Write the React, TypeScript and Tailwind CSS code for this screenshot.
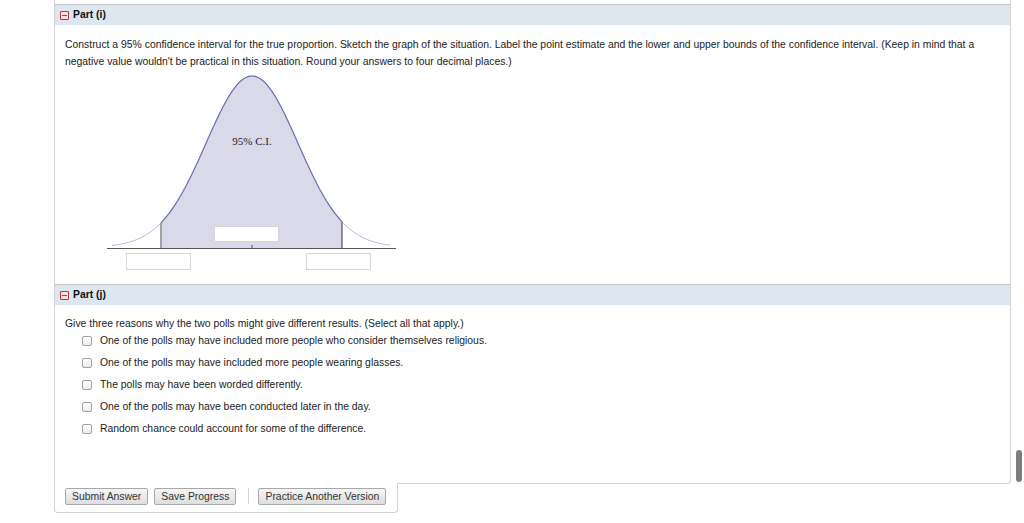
import React from "react";

const MU = 152;
const SIGMA = 46;
const BASE = 177;
const PEAK = 171;
const LO = 61;
const HI = 242;

function yAt(x: number) {
  const d = x - MU;
  return BASE - PEAK * Math.exp(-(d * d) / (2 * SIGMA * SIGMA));
}

function curve(from: number, to: number) {
  const pts: string[] = [];
  for (let x = from; x <= to; x += 1) {
    pts.push(`${x},${yAt(x).toFixed(2)}`);
  }
  return pts;
}

function BellGraph() {
  const mid = curve(LO, HI);
  const fill = `M${LO},178 L${mid.join(" L")} L${HI},178 Z`;
  return (
    <div className="relative ml-[35px] h-[203px] w-[300px]">
      <svg width="300" height="203" className="absolute left-0 top-0">
        <path d={fill} fill="#d9d9e9" />
        <polyline points={curve(12, LO).join(" ")} fill="none" stroke="#a9a9d6" strokeWidth="0.8" />
        <polyline points={curve(HI, 290).join(" ")} fill="none" stroke="#a9a9d6" strokeWidth="0.8" />
        <polyline points={mid.join(" ")} fill="none" stroke="#6b6bb0" strokeWidth="1.2" />
        <line x1={LO} y1={yAt(LO)} x2={LO} y2="178" stroke="#8a8a8a" strokeWidth="1.5" />
        <line x1={HI} y1={yAt(HI)} x2={HI} y2="178" stroke="#6e6e6e" strokeWidth="1.5" />
        <line x1="7" y1="178.5" x2="296" y2="178.5" stroke="#555" strokeWidth="1" />
        <line x1={MU} y1="175" x2={MU} y2="178" stroke="#555" strokeWidth="1" />
        <text
          x={MU}
          y="75"
          textAnchor="middle"
          fontSize="11"
          fontFamily="'Liberation Serif', serif"
          fill="#222"
        >
          95% C.I.
        </text>
      </svg>
      <div className="absolute left-[114px] top-[156px] h-[16px] w-[65px] border border-[#d6d6d6] bg-white" />
      <div className="absolute left-[26px] top-[183px] h-[17px] w-[65px] border border-[#d6d6d6] bg-white" />
      <div className="absolute left-[206px] top-[183px] h-[17px] w-[65px] border border-[#d6d6d6] bg-white" />
    </div>
  );
}

function PartHeader({ label }: { label: string }) {
  return (
    <div className="flex h-[21px] items-center gap-[4px] border-t border-[#c6c6c6] bg-[#dce7ef] pl-[5px]">
      <span className="flex h-[9px] w-[9px] items-center justify-center rounded-[1px] border border-[#b8323f] bg-[#f7e1e1]">
        <span className="h-[1px] w-[5px] bg-[#b8323f]" />
      </span>
      <span className="text-[10.4px] font-bold text-[#111]">{label}</span>
    </div>
  );
}

const reasons = [
  "One of the polls may have included more people who consider themselves religious.",
  "One of the polls may have included more people wearing glasses.",
  "The polls may have been worded differently.",
  "One of the polls may have been conducted later in the day.",
  "Random chance could account for some of the difference.",
];

function Btn({ children }: { children: React.ReactNode }) {
  return (
    <button className="h-[17px] rounded-[2px] border border-[#a8a8a8] bg-gradient-to-b from-[#f6f6f6] to-[#dedede] px-[6px] text-[10.4px] leading-[15px] text-[#333]">
      {children}
    </button>
  );
}

export default function App() {
  return (
    <div className="relative h-[523px] w-[1024px] overflow-hidden bg-white font-['Liberation_Sans',Arial,sans-serif] text-[#222]">
      <div className="ml-[54px] h-[484px] w-[957px] rounded-br-[4px] border border-t-0 border-[#d2d2d2] pt-[4px]">
        <PartHeader label="Part (i)" />
        <div className="h-[259px] pl-[10px] pr-[20px] pt-[11px]">
          <p className="text-[10.4px] leading-[17px]">
            Construct a 95% confidence interval for the true proportion. Sketch the graph of the situation. Label the point estimate and the lower and upper bounds of the confidence interval. (Keep in mind that a negative value wouldn't be practical in this situation. Round your answers to four decimal places.)
          </p>
          <BellGraph />
        </div>
        <PartHeader label="Part (j)" />
        <div className="h-[178px] pl-[10px] pt-[11px]">
          <p className="text-[10.4px] leading-[16px]">
            Give three reasons why the two polls might give different results. (Select all that apply.)
          </p>
          <ul className="flex flex-col gap-[5px] pl-[17px]">
            {reasons.map((r) => (
              <li key={r} className="flex h-[17px] items-center gap-[8px] text-[10.4px]">
                <span className="h-[10px] w-[10px] rounded-[2px] border border-[#a0a0a0] bg-gradient-to-b from-white to-[#ececec]" />
                <span>{r}</span>
              </li>
            ))}
          </ul>
        </div>
      </div>
      <div className="-mt-px ml-[54px] flex h-[30px] w-[344px] items-start gap-[6px] rounded-b-[4px] border border-t-0 border-[#d2d2d2] bg-white pl-[10px] pt-[5px]">
        <Btn>Submit Answer</Btn>
        <Btn>Save Progress</Btn>
        <span className="ml-[6px] mr-[3px] h-[16px] w-px bg-[#d6d6d6]" />
        <Btn>Practice Another Version</Btn>
      </div>
      <div className="absolute left-[1016px] top-[450px] h-[32px] w-[6px] rounded-full bg-[#7d7d7d]" />
    </div>
  );
}
